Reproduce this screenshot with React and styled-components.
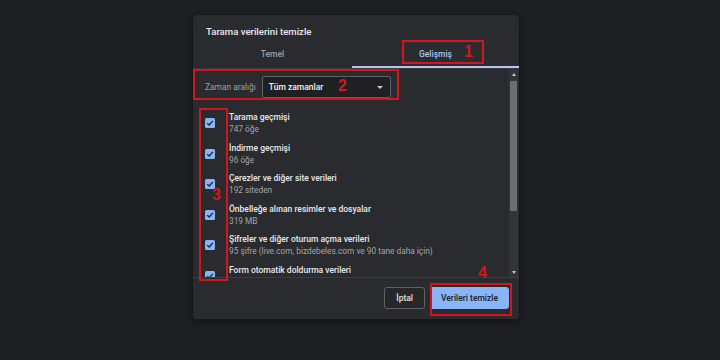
import styled, { createGlobalStyle } from 'styled-components';

const items = [
  { title: 'Tarama geçmişi', sub: '747 öğe' },
  { title: 'İndirme geçmişi', sub: '96 öğe' },
  { title: 'Çerezler ve diğer site verileri', sub: '192 siteden' },
  { title: 'Önbelleğe alınan resimler ve dosyalar', sub: '319 MB' },
  {
    title: 'Şifreler ve diğer oturum açma verileri',
    sub: '95 şifre (live.com, bizdebeles.com ve 90 tane daha için)',
  },
  { title: 'Form otomatik doldurma verileri', sub: '\u00a0' },
];

const marks = [
  { box: [209, 25, 82, 24], num: '1', at: [271, 29] },
  { box: [0, 54, 206, 31], num: '2', at: [145, 63] },
  { box: [6, 93, 29, 173], num: '3', at: [19, 172] },
  { box: [237, 268, 82, 33], num: '4', at: [285, 250] },
];

const Global = createGlobalStyle`
  html, body {
    margin: 0;
    padding: 0;
    background: #1e1f22;
    width: 720px;
    height: 360px;
    overflow: hidden;
    font-family: Roboto, "Noto Sans", sans-serif;
  }
`;

const Page = styled.div`
  width: 720px;
  height: 360px;
  padding: 15px 0 0 193px;
  box-sizing: border-box;
`;

const Dialog = styled.div`
  position: relative;
  width: 326px;
  height: 304px;
  background: #2a2b2e;
  border-radius: 4px;
  box-shadow: 0 2px 8px rgba(0, 0, 0, 0.5);
  display: flex;
  flex-direction: column;
`;

const Title = styled.div`
  padding: 10px 13px 0;
  height: 14px;
  font-size: 9.6px;
  line-height: 14px;
  font-weight: 500;
  color: #e8eaed;
`;

const Tabs = styled.div`
  display: grid;
  grid-template-columns: 159px 1fr;
  margin-top: 3px;
  border-bottom: 1px solid #3a3b3e;
`;

const Tab = styled.div`
  height: 24px;
  line-height: 24px;
  text-align: center;
  font-size: 8.5px;
  font-weight: 500;
  color: ${p => (p.active ? '#a8c4f6' : '#9aa0a6')};
  border-bottom: 2px solid ${p => (p.active ? '#b9c4f4' : 'transparent')};
`;

const Body = styled.div`
  display: flex;
  height: 208px;
  border-bottom: 1px solid #3c3d40;
  overflow: hidden;
`;

const List = styled.div`
  flex: 1;
  overflow: hidden;
  padding-left: 12px;
`;

const RangeRow = styled.div`
  display: flex;
  align-items: center;
  gap: 6px;
  margin-top: 7px;
  height: 22px;
`;

const RangeLabel = styled.span`
  font-size: 8.4px;
  color: #9aa0a6;
`;

const Select = styled.div`
  width: 129px;
  height: 22px;
  box-sizing: border-box;
  background: #1f2023;
  border: 1px solid #5f6368;
  border-radius: 2px;
  display: flex;
  align-items: center;
  justify-content: space-between;
  padding: 0 7px 0 6px;
  font-size: 8.5px;
  font-weight: 500;
  color: #f1f3f4;
`;

const Caret = styled.span`
  width: 0;
  height: 0;
  border-left: 3px solid transparent;
  border-right: 3px solid transparent;
  border-top: 3px solid #c8cacd;
`;

const Items = styled.div`
  margin-top: 9.75px;
`;

const Item = styled.div`
  display: flex;
  align-items: center;
  height: 30.5px;
`;

const Check = styled.span`
  width: 10px;
  height: 10px;
  margin-right: 14px;
  border-radius: 1.5px;
  background: #8ab4f8;
  display: flex;
  align-items: center;
  justify-content: center;
  flex-shrink: 0;
`;

const Texts = styled.div`
  display: flex;
  flex-direction: column;
`;

const ItemTitle = styled.span`
  font-size: 8.5px;
  line-height: 12px;
  color: #e8eaed;
  font-weight: 500;
`;

const ItemSub = styled.span`
  font-size: 8.3px;
  line-height: 12px;
  color: #a3a6ab;
`;

const Scrollbar = styled.div`
  width: 9px;
  margin-right: 1px;
  background: #333437;
  display: flex;
  flex-direction: column;
  align-items: center;
`;

const Arrow = styled.span`
  height: 10px;
  display: flex;
  align-items: center;
  justify-content: center;
  &::after {
    content: '';
    border-left: 2.5px solid transparent;
    border-right: 2.5px solid transparent;
    ${p =>
      p.down
        ? 'border-top: 3px solid #c5c6c8;'
        : 'border-bottom: 3px solid #c5c6c8;'}
  }
`;

const Thumb = styled.div`
  width: 7px;
  height: 130px;
  margin-top: 2px;
  background: #6c6d70;
`;

const Spacer = styled.div`
  flex: 1;
`;

const Footer = styled.div`
  flex: 1;
  display: flex;
  align-items: center;
  justify-content: flex-end;
  gap: 5px;
  padding: 0 10px 2px 0;
`;

const Button = styled.div`
  height: 22px;
  box-sizing: border-box;
  padding: 0 ${p => (p.primary ? '10px' : '11px')};
  border-radius: 3px;
  display: flex;
  align-items: center;
  font-size: 8.5px;
  font-weight: 500;
  color: ${p => (p.primary ? '#202124' : '#e0e2e5')};
  background: ${p => (p.primary ? '#8ab4f8' : '#262729')};
  border: 1px solid ${p => (p.primary ? '#8ab4f8' : '#5f6368')};
`;

const MarkBox = styled.div`
  position: absolute;
  border: 2px solid #d3161d;
  box-sizing: border-box;
  pointer-events: none;
`;

const MarkNum = styled.span`
  position: absolute;
  font-family: "Liberation Sans", Arial, sans-serif;
  font-size: 16px;
  line-height: 16px;
  font-weight: 700;
  color: #d3161d;
`;

const CheckIcon = () => (
  <svg width='8' height='8' viewBox='0 0 8 8'>
    <path d='M1.2 4.1 L3.2 6 L6.9 1.9' fill='none' stroke='#202124' strokeWidth='1.3' />
  </svg>
);

const App = () => (
  <Page>
    <Global />
    <Dialog>
      <Title>Tarama verilerini temizle</Title>
      <Tabs>
        <Tab>Temel</Tab>
        <Tab active>Gelişmiş</Tab>
      </Tabs>
      <Body>
        <List>
          <RangeRow>
            <RangeLabel>Zaman aralığı</RangeLabel>
            <Select>
              Tüm zamanlar
              <Caret />
            </Select>
          </RangeRow>
          <Items>
            {items.map((item, i) => (
              <Item key={i}>
                <Check>
                  <CheckIcon />
                </Check>
                <Texts>
                  <ItemTitle>{item.title}</ItemTitle>
                  <ItemSub>{item.sub}</ItemSub>
                </Texts>
              </Item>
            ))}
          </Items>
        </List>
        <Scrollbar>
          <Arrow />
          <Thumb />
          <Spacer />
          <Arrow down />
        </Scrollbar>
      </Body>
      <Footer>
        <Button>İptal</Button>
        <Button primary>Verileri temizle</Button>
      </Footer>
      {marks.map((m, i) => (
        <div key={i}>
          <MarkBox
            style={{ left: m.box[0], top: m.box[1], width: m.box[2], height: m.box[3] }}
          />
          <MarkNum style={{ left: m.at[0], top: m.at[1] }}>{m.num}</MarkNum>
        </div>
      ))}
    </Dialog>
  </Page>
);

export default App;
